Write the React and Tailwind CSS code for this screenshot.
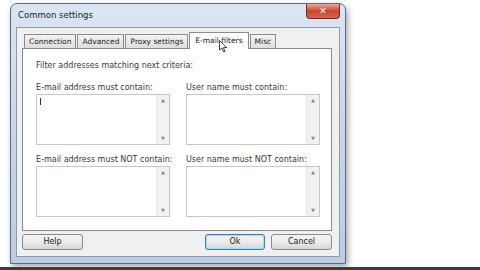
import React from 'react';

const font = { fontFamily: '"DejaVu Sans", Verdana, sans-serif' };

function Box() {
    return (
        <div className="flex h-[51px] w-[134px] border border-[#c4c8cf] bg-white">
            <div className="flex-1" />
            <div className="flex w-[13px] flex-col items-center justify-between border-l border-[#e6e6e6] bg-[#f2f2f2] py-[3px] text-[5px] leading-none text-[#8a8a8a]">
                <span>▲</span>
                <span>▼</span>
            </div>
        </div>
    );
}

function Tab({ label, active }) {
    if (active) {
        return (
            <div className="relative z-10 -mb-px flex h-[17px] items-center border border-b-0 border-[#898c95] bg-white px-[5px] text-[#222]">
                {label}
            </div>
        );
    }
    return (
        <div className="flex h-[14px] items-center border border-b-0 border-[#898c95] bg-gradient-to-b from-[#f3f3f3] to-[#dedede] px-[4px] text-[#222]">
            {label}
        </div>
    );
}

function Button({ label, focused }) {
    return (
        <div className={`flex h-[16px] items-center justify-center rounded-[3px] border bg-gradient-to-b from-[#f4f4f4] via-[#ebebeb] to-[#d6d6d6] text-[#222] ${focused ? 'w-[60px] border-[#3c7fb1] shadow-[inset_0_0_0_1px_#a7dcf5]' : 'w-[61px] border-[#8a8a8a]'}`}>
            {label}
        </div>
    );
}

function Field({ label, caret }) {
    return (
        <div className="flex w-[134px] flex-col gap-[1px]">
            <span className="whitespace-nowrap">{label}</span>
            <div className="relative">
                <Box />
                {caret && <div className="absolute left-[4px] top-[4px] h-[7px] w-px bg-[#333]" />}
            </div>
        </div>
    );
}

export default function App() {
    return (
        <div className="relative flex h-[270px] w-[480px] flex-col overflow-hidden bg-white" style={font}>
            <div className="pl-[10px] pt-[3px]">
                <div className="flex h-[261px] w-[336px] flex-col rounded-t-[7px] border border-[#5c6b80] bg-gradient-to-b from-[#dbe6f3] via-[#c7d6e8] to-[#bccde3] px-[5px] pb-[6px] shadow-[2px_3px_6px_rgba(0,0,0,0.35)]">
                    <div className="flex h-[23px] items-center justify-between">
                        <span className="pl-[2px] text-[8.5px] text-[#1e1e1e]">Common settings</span>
                        <div className="mb-[2px] flex h-[15px] w-[34px] items-center justify-center self-start rounded-b-[4px] border border-t-0 border-[#7a2a1e] bg-gradient-to-b from-[#e8a89a] via-[#c9452f] to-[#d2664d] text-[9px] font-bold leading-none text-white">
                            ✕
                        </div>
                    </div>
                    <div className="flex flex-1 flex-col border border-[#8d9bb0] bg-[#f0f0f0] pl-[5px] pr-[7px] text-[8px]">
                        <div className="mt-[4px] flex h-[16px] items-end gap-[1px] pl-[2px] text-[7.5px]">
                            <Tab label="Connection" />
                            <Tab label="Advanced" />
                            <Tab label="Proxy settings" />
                            <Tab label="E-mail filters" active />
                            <Tab label="Misc" />
                        </div>
                        <div className="flex h-[183px] flex-col border border-[#898c95] bg-white pl-[13px] pt-[12px] leading-[10px] text-[#3a3a3a]">
                            <div>Filter addresses matching next criteria:</div>
                            <div className="mt-[12px] flex gap-[16px]">
                                <Field label="E-mail address must contain:" caret />
                                <Field label="User name must contain:" />
                            </div>
                            <div className="mt-[10px] flex gap-[16px]">
                                <Field label="E-mail address must NOT contain:" />
                                <Field label="User name must NOT contain:" />
                            </div>
                        </div>
                        <div className="mt-[3px] flex items-center">
                            <Button label="Help" />
                            <div className="flex-1" />
                            <Button label="Ok" focused />
                            <div className="w-[6px]" />
                            <Button label="Cancel" />
                        </div>
                    </div>
                </div>
            </div>
            <div className="flex-1" />
            <div className="h-[3px] bg-[#3c3c3c]" />
            <svg className="absolute left-[219px] top-[40px] z-20" width="9" height="13" viewBox="0 0 9 13">
                <path d="M0.5 0.5 L0.5 10 L2.9 8 L4.6 12 L6 11.4 L4.4 7.6 L7.8 7.6 Z" fill="#fff" stroke="#111" strokeWidth="0.8" />
            </svg>
        </div>
    );
}
